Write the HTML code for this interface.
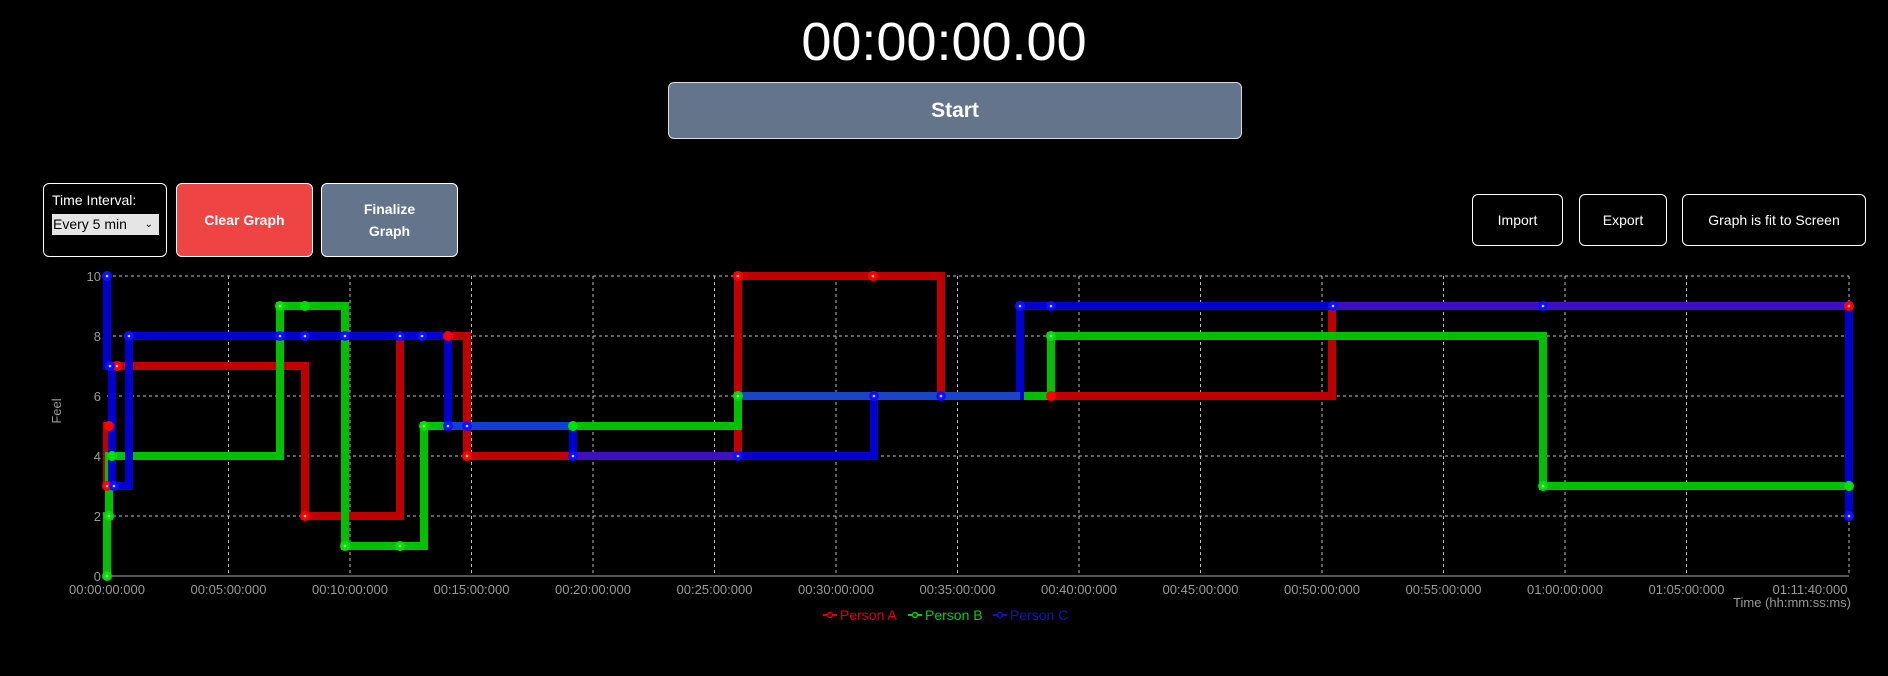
<!DOCTYPE html>
<html><head><meta charset="utf-8"><style>
*{box-sizing:border-box;margin:0;padding:0}
body{width:1888px;height:676px;background:#000;color:#fff;font-family:"Liberation Sans",sans-serif;position:relative;overflow:hidden}
.abs{position:absolute}
.timer{left:0;width:1888px;top:12px;text-align:center;font-size:54px;line-height:60px;color:#fff}
.start{left:668px;top:82px;width:574px;height:57px;background:#64748b;border:1px solid #ddd;border-radius:6px;font-weight:bold;font-size:21px;display:flex;align-items:center;justify-content:center}
.box{border:1px solid #fff;border-radius:6px;display:flex;align-items:center;justify-content:center;text-align:center;font-size:14px}
.sel{left:52px;top:214px;width:107px;height:21px;background:#e5e5e5;color:#000;font-size:14px;line-height:21px;padding-left:1px}
</style></head><body>
<div class="abs timer">00:00:00.00</div>
<div class="abs start">Start</div>
<div class="abs box" style="left:43px;top:183px;width:124px;height:74px;display:block;text-align:left"></div>
<div class="abs" style="left:52px;top:192px;font-size:14px">Time Interval:</div>
<div class="abs sel">Every 5 min<span style="position:absolute;right:6px;font-size:10px">&#8964;</span></div>
<div class="abs box" style="left:176px;top:183px;width:137px;height:74px;background:#ef4444;font-weight:bold">Clear Graph</div>
<div class="abs box" style="left:321px;top:183px;width:137px;height:74px;background:#64748b;font-weight:bold;line-height:22px">Finalize<br>Graph</div>
<div class="abs box" style="left:1472px;top:194px;width:91px;height:52px">Import</div>
<div class="abs box" style="left:1579px;top:194px;width:88px;height:52px">Export</div>
<div class="abs box" style="left:1682px;top:194px;width:184px;height:52px">Graph is fit to Screen</div>
<svg class="abs" style="left:0;top:0" width="1888" height="676" xmlns="http://www.w3.org/2000/svg">
<g stroke="#bbb" stroke-width="1" stroke-dasharray="3,3" fill="none">
<line x1="107" y1="276" x2="1849" y2="276"/><line x1="107" y1="336" x2="1849" y2="336"/><line x1="107" y1="396" x2="1849" y2="396"/><line x1="107" y1="456" x2="1849" y2="456"/><line x1="107" y1="516" x2="1849" y2="516"/>
<line x1="228.5" y1="276" x2="228.5" y2="576"/><line x1="350" y1="276" x2="350" y2="576"/><line x1="471.5" y1="276" x2="471.5" y2="576"/><line x1="593" y1="276" x2="593" y2="576"/><line x1="714.5" y1="276" x2="714.5" y2="576"/><line x1="836" y1="276" x2="836" y2="576"/><line x1="957.5" y1="276" x2="957.5" y2="576"/><line x1="1079" y1="276" x2="1079" y2="576"/><line x1="1200.5" y1="276" x2="1200.5" y2="576"/><line x1="1322" y1="276" x2="1322" y2="576"/><line x1="1443.5" y1="276" x2="1443.5" y2="576"/><line x1="1565" y1="276" x2="1565" y2="576"/><line x1="1686.5" y1="276" x2="1686.5" y2="576"/><line x1="1849" y1="276" x2="1849" y2="576"/>
</g>
<line x1="107" y1="576" x2="1849" y2="576" stroke="#aaa" stroke-width="1"/>
<g fill="#999" font-size="13" font-family="Liberation Sans, sans-serif">
<g text-anchor="end"><text x="101" y="281">10</text><text x="101" y="341">8</text><text x="101" y="401">6</text><text x="101" y="461">4</text><text x="101" y="521">2</text><text x="101" y="581">0</text></g>
<g text-anchor="middle">
<text x="107" y="594">00:00:00:000</text><text x="228.5" y="594">00:05:00:000</text><text x="350" y="594">00:10:00:000</text><text x="471.5" y="594">00:15:00:000</text><text x="593" y="594">00:20:00:000</text><text x="714.5" y="594">00:25:00:000</text><text x="836" y="594">00:30:00:000</text><text x="957.5" y="594">00:35:00:000</text><text x="1079" y="594">00:40:00:000</text><text x="1200.5" y="594">00:45:00:000</text><text x="1322" y="594">00:50:00:000</text><text x="1443.5" y="594">00:55:00:000</text><text x="1565" y="594">01:00:00:000</text><text x="1686.5" y="594">01:05:00:000</text><text x="1810" y="594">01:11:40:000</text></g>
<text x="1851" y="607" text-anchor="end">Time (hh:mm:ss:ms)</text>
<text transform="translate(61,411) rotate(-90)" text-anchor="middle">Feel</text>
</g>
<g fill="none" stroke-width="8" stroke-linejoin="miter">
<path stroke="#c00000" d="M107,486 V426 H112 V366 H305 V516 H400 V336 H467 V456 H738 V276 H941 V396 H1332 V306 H1849"/>
<path stroke="#00c000" d="M107,576 V516 H109 V456 H280 V306 H345 V546 H424 V426 H738 V396 H1051 V336 H1543 V486 H1849"/>
<path stroke="#0000d0" d="M107,276 V366 H112 V486 H129 V336 H448 V426 H573 V456 H874 V396 H1020 V306 H1849 V516"/>
<path stroke="#1040d0" d="M448,426 H573"/>
<path stroke="#4010c0" d="M573,456 H738"/>
<path stroke="#1a45c8" d="M738,396 H1020"/>
<path stroke="#3c10c0" d="M1333,306 H1849"/>
<path stroke="#c00000" d="M1051,396 H1332"/>
</g>
<g fill="#ff0000"><circle cx="107" cy="486" r="5"/><circle cx="109" cy="426" r="5"/><circle cx="117" cy="366" r="5"/><circle cx="305" cy="516" r="5"/><circle cx="448" cy="336" r="5"/><circle cx="467" cy="456" r="5"/><circle cx="738" cy="276" r="5"/><circle cx="873" cy="276" r="5"/><circle cx="1051" cy="396" r="5"/><circle cx="1849" cy="306" r="5"/></g>
<g fill="#00e000"><circle cx="107" cy="576" r="5"/><circle cx="109" cy="516" r="5"/><circle cx="112" cy="456" r="5"/><circle cx="280" cy="306" r="5"/><circle cx="305" cy="306" r="5"/><circle cx="345" cy="546" r="5"/><circle cx="400" cy="546" r="5"/><circle cx="424" cy="426" r="5"/><circle cx="573" cy="426" r="5"/><circle cx="738" cy="396" r="5"/><circle cx="1051" cy="336" r="5"/><circle cx="1543" cy="486" r="5"/><circle cx="1849" cy="486" r="5"/></g>
<g fill="#1010ff"><circle cx="107" cy="276" r="5"/><circle cx="110" cy="366" r="5"/><circle cx="114" cy="486" r="5"/><circle cx="129" cy="336" r="5"/><circle cx="280" cy="336" r="5"/><circle cx="305" cy="336" r="5"/><circle cx="345" cy="336" r="5"/><circle cx="400" cy="336" r="5"/><circle cx="422" cy="336" r="5"/><circle cx="448" cy="426" r="5"/><circle cx="467" cy="426" r="5"/><circle cx="573" cy="456" r="5"/><circle cx="738" cy="456" r="5"/><circle cx="874" cy="396" r="5"/><circle cx="941" cy="396" r="5"/><circle cx="1020" cy="306" r="5"/><circle cx="1051" cy="306" r="5"/><circle cx="1333" cy="306" r="5"/><circle cx="1543" cy="306" r="5"/><circle cx="1849" cy="516" r="5"/></g>
<g fill="#fff" opacity="0.8">
<circle cx="107" cy="486" r="1.3"/><circle cx="117" cy="366" r="1.3"/><circle cx="305" cy="516" r="1.3"/><circle cx="467" cy="456" r="1.3"/><circle cx="738" cy="276" r="1.3"/><circle cx="873" cy="276" r="1.3"/><circle cx="1849" cy="306" r="1.3"/>
<circle cx="107" cy="576" r="1.3"/><circle cx="109" cy="516" r="1.3"/><circle cx="280" cy="306" r="1.3"/><circle cx="345" cy="546" r="1.3"/><circle cx="400" cy="546" r="1.3"/><circle cx="424" cy="426" r="1.3"/><circle cx="738" cy="396" r="1.3"/><circle cx="1051" cy="336" r="1.3"/><circle cx="1543" cy="486" r="1.3"/>
<circle cx="107" cy="276" r="1.3"/><circle cx="110" cy="366" r="1.3"/><circle cx="114" cy="486" r="1.3"/><circle cx="129" cy="336" r="1.3"/><circle cx="280" cy="336" r="1.3"/><circle cx="305" cy="336" r="1.3"/><circle cx="345" cy="336" r="1.3"/><circle cx="400" cy="336" r="1.3"/><circle cx="422" cy="336" r="1.3"/><circle cx="448" cy="426" r="1.3"/><circle cx="467" cy="426" r="1.3"/><circle cx="573" cy="456" r="1.3"/><circle cx="738" cy="456" r="1.3"/><circle cx="874" cy="396" r="1.3"/><circle cx="941" cy="396" r="1.3"/><circle cx="1020" cy="306" r="1.3"/><circle cx="1051" cy="306" r="1.3"/><circle cx="1333" cy="306" r="1.3"/><circle cx="1543" cy="306" r="1.3"/><circle cx="1849" cy="516" r="1.3"/>
</g>
<g font-size="14" font-family="Liberation Sans, sans-serif">
<line x1="823" y1="615" x2="837" y2="615" stroke="#e00000" stroke-width="2"/><circle cx="830" cy="615" r="2.5" fill="#000" stroke="#e00000" stroke-width="1.5"/><text x="840" y="620" fill="#e00000">Person A</text>
<line x1="908" y1="615" x2="922" y2="615" stroke="#00d000" stroke-width="2"/><circle cx="915" cy="615" r="2.5" fill="#000" stroke="#00d000" stroke-width="1.5"/><text x="925" y="620" fill="#00d000">Person B</text>
<line x1="993" y1="615" x2="1007" y2="615" stroke="#1010d0" stroke-width="2"/><circle cx="1000" cy="615" r="2.5" fill="#000" stroke="#1010d0" stroke-width="1.5"/><text x="1010" y="620" fill="#1010d0">Person C</text>
</g>
</svg>
</body></html>
